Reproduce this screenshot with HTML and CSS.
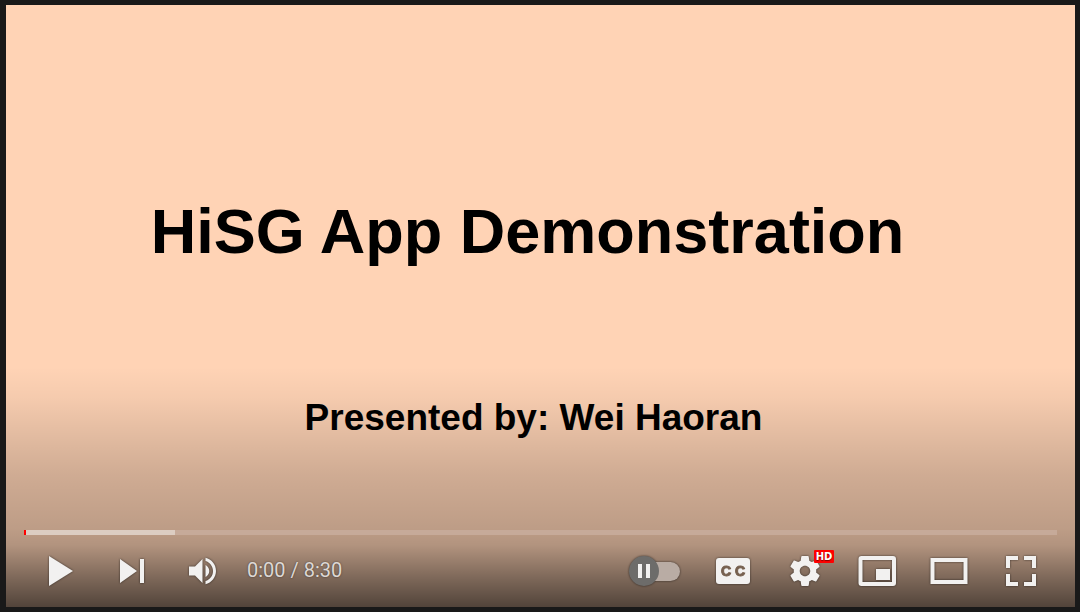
FILE: index.html
```html
<!DOCTYPE html>
<html lang="en">
<head>
<meta charset="utf-8">
<title>HiSG App Demonstration</title>
<link rel="stylesheet" href="styles.css">
</head>
<body>
<main class="player">
  <section class="slide">
    <h1 class="slide-title">HiSG App Demonstration</h1>
    <p class="slide-author">Presented by: Wei Haoran</p>
  </section>
  <div class="chrome">
    <input class="seek" type="range" min="0" max="510" value="0" aria-label="Seek">
    <div class="controls">
      <button class="control" type="button" aria-label="Play">
        <svg class="icon" viewBox="0 0 72 72"><path d="M25 21L49 36L25 51Z"/></svg>
      </button>
      <button class="control" type="button" aria-label="Next">
        <svg class="icon" viewBox="0 0 36 36"><path d="M12 24L20.5 18L12 12ZM22 12V24H24V12Z"/></svg>
      </button>
      <button class="control" type="button" aria-label="Mute">
        <svg class="icon" viewBox="-6 -6 48 48"><path d="M8 21L12 21L17 26L17 10L12 15L8 15ZM19 14L19 22C20.48 21.32 21.5 19.77 21.5 18C21.5 16.26 20.48 14.74 19 14ZM19 11.29C21.89 12.15 24 14.83 24 18C24 21.17 21.89 23.85 19 24.71L19 26.77C23.01 25.86 26 22.28 26 18C26 13.72 23.01 10.14 19 9.23Z"/></svg>
      </button>
      <span class="time">0:00 / 8:30</span>
      <label class="control autoplay">
        <input class="autoplay-input" type="checkbox" aria-label="Autoplay">
        <svg class="icon" viewBox="0 0 72 72">
          <rect class="toggle-track" x="17" y="27" width="38" height="19" rx="9.5"/>
          <circle class="toggle-knob" cx="19" cy="36" r="15"/>
          <path d="M13 29H17V43H13ZM21 29H25V43H21Z"/>
        </svg>
      </label>
      <button class="control" type="button" aria-label="Subtitles">
        <svg class="icon" viewBox="0 0 72 72">
          <rect x="19" y="23" width="34" height="26" rx="3"/>
          <text class="cc-letter" x="29" y="41">C</text>
          <text class="cc-letter" x="43" y="41">C</text>
        </svg>
      </button>
      <button class="control" type="button" aria-label="Settings">
        <svg class="icon" viewBox="-1.2 -1.2 38.4 38.4"><path d="m 23.94,18.78 c .03,-0.25 .05,-0.51 .05,-0.78 0,-0.27 -0.02,-0.52 -0.05,-0.78 l 1.68,-1.32 c .15,-0.12 .19,-0.33 .09,-0.51 l -1.6,-2.76 c -0.09,-0.17 -0.31,-0.24 -0.48,-0.17 l -1.99,.8 c -0.41,-0.32 -0.86,-0.58 -1.35,-0.78 l -0.30,-2.12 c -0.02,-0.19 -0.19,-0.33 -0.39,-0.33 l -3.2,0 c -0.2,0 -0.36,.14 -0.39,.33 l -0.30,2.12 c -0.48,.2 -0.93,.47 -1.35,.78 l -1.99,-0.8 c -0.18,-0.07 -0.39,0 -0.48,.17 l -1.6,2.76 c -0.10,.17 -0.05,.39 .09,.51 l 1.68,1.32 c -0.03,.25 -0.05,.52 -0.05,.78 0,.26 .02,.52 .05,.78 l -1.68,1.32 c -0.15,.12 -0.19,.33 -0.09,.51 l 1.6,2.76 c .09,.17 .31,.24 .48,.17 l 1.99,-0.8 c .41,.32 .86,.58 1.35,.78 l .30,2.12 c .02,.19 .19,.33 .39,.33 l 3.2,0 c .2,0 .36,-0.14 .39,-0.33 l .30,-2.12 c .48,-0.2 .93,-0.47 1.35,-0.78 l 1.99,.8 c .18,.07 .39,0 .48,-0.17 l 1.6,-2.76 c .09,-0.17 .05,-0.39 -0.09,-0.51 l -1.68,-1.32 z m -5.94,2.01 c -1.54,0 -2.8,-1.25 -2.8,-2.8 0,-1.54 1.25,-2.8 2.8,-2.8 1.54,0 2.8,1.25 2.8,2.8 0,1.54 -1.25,2.8 -2.8,2.8 z"/></svg>
        <span class="badge">HD</span>
      </button>
      <button class="control" type="button" aria-label="Miniplayer">
        <svg class="icon" viewBox="0 0 72 72"><path fill-rule="evenodd" d="M20.500 21H52Q55 21 55 24V48Q55 51 52 51H20.500Q17.500 51 17.500 48V24Q17.500 21 20.500 21ZM21.500 25V47H51V25ZM35 34H49V45H35Z"/></svg>
      </button>
      <button class="control" type="button" aria-label="Theater mode">
        <svg class="icon" viewBox="0 0 72 72"><path fill-rule="evenodd" d="M17.500 23H54.500V49H17.500ZM21.500 27V45H50.500V27Z"/></svg>
      </button>
      <button class="control" type="button" aria-label="Full screen">
        <svg class="icon" viewBox="0 0 72 72"><path d="M21 21H33V25H25V33H21ZM39 21H51V33H47V25H39ZM21 39H25V47H33V51H21ZM47 39H51V51H39V47H47Z"/></svg>
      </button>
    </div>
  </div>
</main>
</body>
</html>
```
FILE: styles.css
```css
* {
  box-sizing: border-box;
}

body {
  margin: 0;
  min-height: 100vh;
  display: flex;
  padding: 5px 5px 5px 6px;
  background: #191919;
  font-family: Roboto, Arial, sans-serif;
}

.player {
  flex: 1;
  display: flex;
  flex-direction: column;
  background:
    linear-gradient(to top,
      rgba(0, 0, 0, 0.68) 0,
      rgba(0, 0, 0, 0.5) 30px,
      rgba(0, 0, 0, 0.3) 62px,
      rgba(0, 0, 0, 0.26) 78px,
      rgba(0, 0, 0, 0.19) 132px,
      rgba(0, 0, 0, 0.12) 167px,
      rgba(0, 0, 0, 0.04) 210px,
      rgba(0, 0, 0, 0) 240px),
    #ffd3b5;
}

.slide {
  flex: 1;
  display: flex;
  flex-direction: column;
  align-items: center;
  gap: 123px;
  padding-top: 188px;
  color: #000;
  font-family: "Liberation Sans", Arial, sans-serif;
  font-weight: 700;
}

.slide-title {
  margin: 0;
  padding-right: 26px;
  font-size: 63px;
  line-height: 76px;
}

.slide-author {
  margin: 0;
  padding-right: 14px;
  font-size: 37px;
  line-height: 52px;
}

.chrome {
  padding: 0 18px;
}

.seek {
  appearance: none;
  display: block;
  width: 100%;
  height: 5px;
  margin: 0;
  background: linear-gradient(to right, #dccdc2 151px, #c6aa99 151px);
}

.seek::-webkit-slider-thumb {
  appearance: none;
  width: 2px;
  height: 5px;
  background: #f00;
}

.controls {
  display: flex;
  align-items: center;
}

.control {
  position: relative;
  width: 72px;
  height: 72px;
  padding: 0;
  border: 0;
  background: none;
  cursor: pointer;
}

.icon {
  display: block;
  width: 72px;
  height: 72px;
  overflow: visible;
  fill: #f2f1f0;
  filter: drop-shadow(0 0 1px rgba(0, 0, 0, 0.6));
}

.time {
  padding: 0 0 2px 7px;
  color: #ddd8d5;
  font-size: 20px;
  line-height: 24px;
  text-shadow: 0 0 2px rgba(0, 0, 0, 0.5);
}

.autoplay {
  margin-left: auto;
}

.autoplay-input {
  position: absolute;
  opacity: 0;
}

.toggle-track {
  fill: #b9aca4;
}

.toggle-knob {
  fill: #6d6c6a;
}

.cc-letter {
  fill: #76604f;
  stroke: #76604f;
  stroke-width: 1px;
  font-family: "Liberation Sans", Arial, sans-serif;
  font-size: 14px;
  font-weight: 700;
  text-anchor: middle;
}

.badge {
  position: absolute;
  top: 15px;
  left: 45px;
  width: 20px;
  border-radius: 1px;
  background: #f00;
  color: #fff;
  font: 700 10px/13px "DejaVu Sans", Verdana, sans-serif;
  text-align: center;
  text-shadow: 0 1px 1px rgba(0, 0, 0, 0.5);
}
```
